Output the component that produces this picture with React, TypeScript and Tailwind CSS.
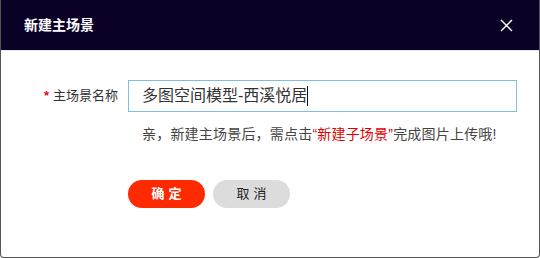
export default function App() {
  return (
    <div
      className="w-[540px] h-[258px] bg-white overflow-hidden rounded-b-[4px] border-x border-b border-[#555] flex flex-col"
      style={{ fontFamily: '"Liberation Sans", "Noto Sans CJK SC", sans-serif' }}
    >
      <div className="h-[51px] shrink-0 bg-[#0b0026] border-b border-[#e8e8ee] flex items-center justify-between pl-[23px] pr-[26px]">
        <span className="text-white text-[14px] font-bold">新建主场景</span>
        <svg width="13" height="13" viewBox="0 0 13 13" className="text-white">
          <path d="M1 1L12 12M12 1L1 12" stroke="currentColor" strokeWidth="1.4" />
        </svg>
      </div>
      <div className="flex flex-col pt-[29px]">
        <div className="flex items-center">
          <label className="w-[127px] pr-[10px] text-right text-[13px] text-[#333]">
            <span className="text-[#e8001a] font-bold mr-[4px]">*</span>主场景名称
          </label>
          <div className="w-[389px] h-[32px] border border-[#7dbde8] flex items-center pl-[13px]">
            <span className="text-[16px] text-[#333]">多图空间模型-西溪悦居</span>
            <span className="w-px h-[20px] bg-[#111]" />
          </div>
        </div>
        <p className="ml-[141px] mt-[12px] text-[14px] text-[#444] tracking-[0.2px]">
          亲，新建主场景后，需点击<span className="text-[#e00000]">“新建子场景”</span>完成图片上传哦!
        </p>
        <div className="ml-[127px] mt-[35px] flex gap-[8px]">
          <button className="w-[77px] h-[28px] rounded-full bg-[#ff2a00] text-white text-[13px] font-bold tracking-[4px] pl-[4px]">
            确定
          </button>
          <button className="w-[77px] h-[28px] rounded-full bg-[#dcdcdc] text-[#222] text-[13px] tracking-[4px] pl-[4px]">
            取消
          </button>
        </div>
      </div>
    </div>
  );
}
